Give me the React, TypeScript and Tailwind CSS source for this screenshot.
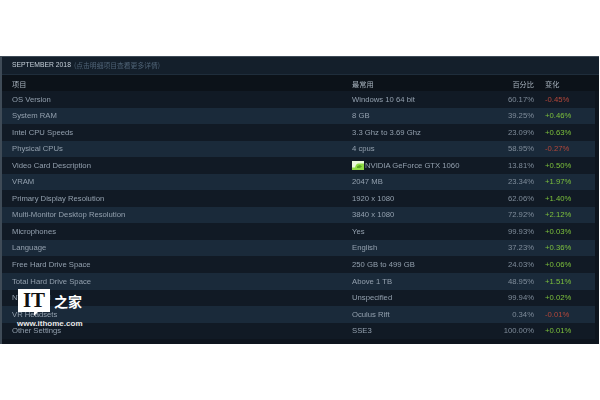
const ROWS = [
  { name: 'OS Version', value: 'Windows 10 64 bit', pct: '60.17%', change: '-0.45%' },
  { name: 'System RAM', value: '8 GB', pct: '39.25%', change: '+0.46%' },
  { name: 'Intel CPU Speeds', value: '3.3 Ghz to 3.69 Ghz', pct: '23.09%', change: '+0.63%' },
  { name: 'Physical CPUs', value: '4 cpus', pct: '58.95%', change: '-0.27%' },
  { name: 'Video Card Description', value: 'NVIDIA GeForce GTX 1060', pct: '13.81%', change: '+0.50%', gpu: true },
  { name: 'VRAM', value: '2047 MB', pct: '23.34%', change: '+1.97%' },
  { name: 'Primary Display Resolution', value: '1920 x 1080', pct: '62.06%', change: '+1.40%' },
  { name: 'Multi-Monitor Desktop Resolution', value: '3840 x 1080', pct: '72.92%', change: '+2.12%' },
  { name: 'Microphones', value: 'Yes', pct: '99.93%', change: '+0.03%' },
  { name: 'Language', value: 'English', pct: '37.23%', change: '+0.36%' },
  { name: 'Free Hard Drive Space', value: '250 GB to 499 GB', pct: '24.03%', change: '+0.06%' },
  { name: 'Total Hard Drive Space', value: 'Above 1 TB', pct: '48.95%', change: '+1.51%' },
  { name: 'NVIDIA SLI', value: 'Unspecified', pct: '99.94%', change: '+0.02%' },
  { name: 'VR Headsets', value: 'Oculus Rift', pct: '0.34%', change: '-0.01%' },
  { name: 'Other Settings', value: 'SSE3', pct: '100.00%', change: '+0.01%' },
];

function GpuIcon() {
  return (
    <svg width="12" height="9" viewBox="0 0 12 9" className="mr-[1px] shrink-0">
      <rect width="12" height="9" fill="#8fdc45" />
      <path d="M0 0h12v2.500H6C4.500 3 3.500 4 3 6.500H0z" fill="#eaf8dc" />
      <path d="M5 5.500c1-1 2-1.500 3-1.500l2 1.500-2 1.500H5z" fill="#5aa524" />
    </svg>
  );
}

export default function App() {
  return (
    <div className="relative h-[400px] w-[600px] overflow-hidden bg-white pt-[56px] font-['Liberation_Sans',Arial,sans-serif]">
      <div className="h-[288px] w-[599px] border-t border-l-[2px] border-[#3f4b57] bg-[#0e151e] blur-[0.5px]">
        {/* Title bar */}
        <div className="flex h-[18px] items-center border-b border-[#1f2d3b] bg-[#141f2b] pl-[10px] text-[6.8px]">
          <span className="text-[#c6d0da]">SEPTEMBER 2018</span>
          <span className="ml-[3px] font-['Noto_Sans_CJK_SC',sans-serif] text-[#4f6376]">(点击明细项目查看更多详情)</span>
        </div>

        {/* Column headers */}
        <div className="flex h-[16px] items-center bg-[#0c1219] pt-[3px] font-['Noto_Sans_CJK_SC',sans-serif] text-[7.2px] text-[#a9b4bf]">
          <div className="w-[350px] pl-[10px]">项目</div>
          <div className="w-[150px]">最常用</div>
          <div className="w-[32px] text-right">百分比</div>
          <div className="ml-[11px]">变化</div>
        </div>

        {/* Rows */}
        {ROWS.map((row, i) => (
          <div
            key={row.name}
            className={`flex h-[16.55px] w-[593px] items-center text-[7.7px] ${i % 2 === 0 ? 'bg-[#111a25]' : 'bg-[#1a2a3a]'}`}
          >
            <div className="w-[350px] pl-[10px] text-[#93a0ae]">{row.name}</div>
            <div className="flex w-[150px] items-center text-[#93a0ae]">
              {row.gpu && <GpuIcon />}
              {row.value}
            </div>
            <div className="w-[32px] text-right whitespace-nowrap text-[#7f8c9a]">{row.pct}</div>
            <div className={`ml-[11px] ${row.change.startsWith('-') ? 'text-[#b5473a]' : 'text-[#7cc03c]'}`}>
              {row.change}
            </div>
          </div>
        ))}
      </div>

      {/* Watermark */}
      <div className="absolute left-[17px] top-[289px] w-[70px]">
        <div className="flex items-start">
          <div className="relative ml-[1px] flex h-[23px] w-[32px] items-center justify-center bg-white text-[21px] leading-none font-bold text-[#111] font-['Liberation_Serif',serif]">
            IT
            <div className="absolute bottom-[-4px] left-[16px] h-0 w-0 border-t-[5px] border-r-[5px] border-t-white border-r-transparent" />
          </div>
          <span className="ml-[4px] font-['Noto_Sans_CJK_SC',sans-serif] text-[14px] leading-[24px] font-bold whitespace-nowrap text-white">之家</span>
        </div>
        <div className="mt-[6px] text-[8px] leading-[9px] font-bold whitespace-nowrap text-[#e8e8e8]">www.ithome.com</div>
      </div>
    </div>
  );
}
